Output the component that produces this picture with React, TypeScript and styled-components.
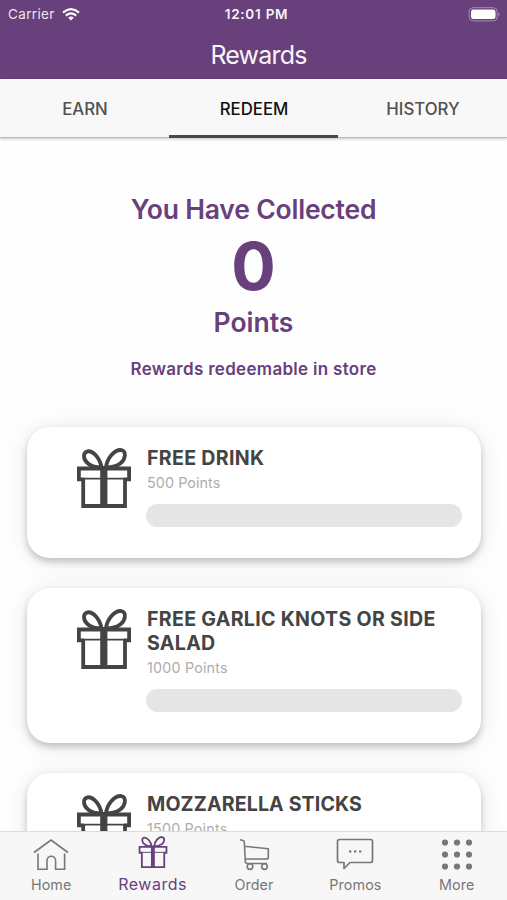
import React from "react";
import styled, { createGlobalStyle } from "styled-components";

const purple = "#68407b";
const ink = "#444444";

const Global = createGlobalStyle`
  * { box-sizing: border-box; }
  body { margin: 0; background: #fff; font-family: Inter, "Liberation Sans", sans-serif; }
`;

const Screen = styled.div`
  display: flex;
  flex-direction: column;
  width: 507px;
  height: 900px;
  overflow: hidden;
  background: #fefefe;
`;

const Header = styled.header`
  flex: none;
  height: 79px;
  background: ${purple};
  color: #f8f4fa;
`;

const StatusBar = styled.div`
  display: grid;
  grid-template-columns: 1fr auto 1fr;
  align-items: center;
  height: 27px;
  padding: 0 6px 0 8px;
  font-size: 13.5px;
  line-height: 28px;
`;

const Carrier = styled.div`
  display: flex;
  align-items: center;
  gap: 7px;
  letter-spacing: 0.35px;
  color: #ece4ef;
`;

const Clock = styled.div`
  font-weight: 600;
  letter-spacing: 0.75px;
  padding-left: 4px;
`;

const Battery = styled.svg`
  justify-self: end;
`;

const Title = styled.h1`
  margin: 0;
  padding-left: 10px;
  text-align: center;
  font-size: 25px;
  line-height: 56px;
  font-weight: 400;
  letter-spacing: -0.8px;
`;

const Tabs = styled.nav`
  position: relative;
  z-index: 1;
  flex: none;
  display: grid;
  grid-template-columns: repeat(3, 1fr);
  height: 59px;
  background: #f8f8f8;
  border-bottom: 1px solid #b9b9b9;
  box-shadow: 0 1px 3px rgba(0, 0, 0, 0.22);
`;

const Tab = styled.div<{ $active?: boolean }>`
  height: 59px;
  padding-left: 1px;
  text-align: center;
  font-size: 16.8px;
  line-height: 60px;
  font-weight: 500;
  color: ${(p) => (p.$active ? "#111" : "#505050")};
  box-shadow: ${(p) => (p.$active ? "inset 0 -3px #484848" : "none")};
`;

const Content = styled.main`
  flex: 1;
  min-height: 0;
  overflow: hidden;
`;

const Summary = styled.section`
  display: flex;
  flex-direction: column;
  align-items: center;
  height: 289px;
  padding-top: 52px;
  color: ${purple};
`;

const Heading = styled.div<{ $spacing: number }>`
  font-size: 26.5px;
  line-height: 39px;
  font-weight: 600;
  letter-spacing: ${(p) => p.$spacing}px;
`;

const Total = styled.div`
  font-size: 66px;
  line-height: 74px;
  font-weight: 700;
`;

const Note = styled.div`
  margin-top: 15px;
  font-size: 17px;
  line-height: 24px;
  font-weight: 600;
  letter-spacing: 0.3px;
`;

const CardList = styled.section`
  display: flex;
  flex-direction: column;
  gap: 30px;
  padding: 0 26px 0 27px;
`;

const Card = styled.article`
  display: flex;
  align-items: flex-start;
  gap: 15px;
  padding: 18px 19px 31px 49px;
  border-radius: 23px;
  background: #fff;
  color: ${ink};
  box-shadow: 0 4px 7px rgba(0, 0, 0, 0.2), 0 2px 26px rgba(0, 0, 0, 0.09);
`;

const CardBody = styled.div`
  flex: 1;
`;

const CardTitle = styled.h2<{ $spacing: number }>`
  margin: 0;
  padding-top: 0.5px;
  font-size: 19.6px;
  line-height: 24.4px;
  font-weight: 650;
  letter-spacing: ${(p) => p.$spacing}px;
`;

const CardPoints = styled.div<{ $spacing: number }>`
  font-size: 14.3px;
  line-height: 20px;
  padding-top: 3px;
  height: 34px;
  letter-spacing: ${(p) => p.$spacing}px;
  color: #adadad;
`;

const Progress = styled.div`
  height: 23.1px;
  margin-left: -1px;
  border-radius: 12px;
  background: #e5e5e5;
`;

const BottomNav = styled.nav`
  position: relative;
  flex: none;
  display: grid;
  grid-template-columns: repeat(5, 1fr);
  height: 69px;
  background: #f7f7f7;
  border-top: 1px solid #dcdcdc;
`;

const NavItem = styled.div<{ $active?: boolean }>`
  display: flex;
  flex-direction: column;
  align-items: center;
  color: ${(p) => (p.$active ? purple : "#777")};
`;

const NavIcon = styled.div<{ $active?: boolean }>`
  display: flex;
  height: ${(p) => (p.$active ? 42 : 43)}px;
  padding: 2px 0 0 1px;
`;

const NavLabel = styled.div<{ $active?: boolean }>`
  font-size: ${(p) => (p.$active ? 16 : 14.3)}px;
  line-height: 20px;
  padding-left: 1px;
  letter-spacing: ${(p) => (p.$active ? 0.5 : 0.12)}px;
`;

const Gift = ({ width, height, stroke = 3.8 }: { width: number; height: number; stroke?: number }) => (
  <svg width={width} height={height} viewBox="0 0 56 64" fill="none" stroke="currentColor" strokeWidth={stroke}>
    <path d="M8 34.300H2.900V23.500h50.200v10.800H48M7.200 34v27h41.800V34" />
    <path d="M7 33.600h42" strokeWidth="1.800" />
    <path d="M27.800 21v41" strokeWidth="7.200" />
    <path d="M25.500 22.500C24 13 17 5.500 11.500 6.300C6.500 7.500 7 14.500 12 18.500C15.500 21.500 20 22.500 25.500 22.500zM30 22.500C31 13 38.500 4.500 45 5C51 6 49.500 14.500 44.500 18.300C40.500 21.500 36 22.500 30 22.500z" />
  </svg>
);

const HomeIcon = () => (
  <svg width="38" height="38" viewBox="0 0 38 38" fill="none" stroke="currentColor" strokeWidth="1.600">
    <path d="M2 18.500L19 6l17 12.500M6 19.500V35.200h9V26.500a4.300 4.300 0 0 1 8.600 0v8.700h9V19.500" />
  </svg>
);

const CartIcon = () => (
  <svg width="38" height="38" viewBox="0 0 38 38" fill="none" stroke="currentColor" strokeWidth="1.600" strokeLinejoin="round">
    <path d="M5 5.700l3 .800q1.200.300 1.300 1.500l1 19.500q.2 2 2.200 2H32M9.500 12.200l23.800 2.600v8.400q0 1.800-1.800 1.800H10.500" />
    <circle cx="15" cy="32.600" r="2.800" />
    <circle cx="29.500" cy="32.600" r="2.800" />
  </svg>
);

const PromoIcon = () => (
  <svg width="38" height="38" viewBox="0 0 38 38" fill="none" stroke="currentColor" strokeWidth="1.700" strokeLinejoin="round">
    <path d="M3.500 5.500h31a2 2 0 0 1 2 2v19a2 2 0 0 1-2 2H14l-6 6v-6H3.500a2 2 0 0 1-2-2V7.500a2 2 0 0 1 2-2z" />
    <path d="M13 17.500h2.400M18 17.500h2.400M23 17.500h2.400" strokeWidth="2" />
  </svg>
);

const MoreIcon = () => (
  <svg width="38" height="38" viewBox="0 0 38 38" fill="currentColor">
    {[8.5, 20.5, 32.5].map((y) => [7, 19, 31].map((x) => <circle key={`${x}-${y}`} cx={x} cy={y} r="3.100" />))}
  </svg>
);

const WifiIcon = () => (
  <svg width="18" height="13" viewBox="0 0 18 13" fill="none" stroke="#fff" strokeWidth="2.100">
    <path d="M1 4.600Q9-2.200 17 4.600M3.800 7.600Q9 3.200 14.200 7.600" />
    <path d="M9 12.500L6.200 9.700Q9 7.500 11.800 9.700z" fill="#fff" stroke="none" />
  </svg>
);

const rewards = [
  { title: "FREE DRINK", points: "500 Points", titleSpacing: 0.3, spacing: 0.1 },
  { title: "FREE GARLIC KNOTS OR SIDE SALAD", points: "1000 Points", titleSpacing: 0.3, spacing: 0.2 },
  { title: "MOZZARELLA STICKS", points: "1500 Points", titleSpacing: 0.13, spacing: 0.2 },
];

const navItems = [
  { label: "Home", icon: <HomeIcon /> },
  { label: "Rewards", icon: <Gift width={30} height={35} stroke={3.4} />, active: true },
  { label: "Order", icon: <CartIcon /> },
  { label: "Promos", icon: <PromoIcon /> },
  { label: "More", icon: <MoreIcon /> },
];

export default function App() {
  return (
    <Screen>
      <Global />
      <Header>
        <StatusBar>
          <Carrier>
            <span>Carrier</span>
            <WifiIcon />
          </Carrier>
          <Clock>12:01 PM</Clock>
          <Battery width="33" height="15" viewBox="0 0 33 15">
            <rect x="1.200" y="0.700" width="28" height="13.200" rx="4" fill="none" stroke="#a68db2" strokeWidth="1" />
            <rect x="3" y="2.500" width="24.500" height="9.600" rx="2.400" fill="#fff" />
            <path d="M30.500 5.200q2.200 2.300 0 4.600z" fill="#a68db2" />
          </Battery>
        </StatusBar>
        <Title>Rewards</Title>
      </Header>
      <Tabs>
        <Tab>EARN</Tab>
        <Tab $active>REDEEM</Tab>
        <Tab>HISTORY</Tab>
      </Tabs>
      <Content>
        <Summary>
          <Heading $spacing={-0.2}>You Have Collected</Heading>
          <Total>0</Total>
          <Heading $spacing={0}>Points</Heading>
          <Note>Rewards redeemable in store</Note>
        </Summary>
        <CardList>
          {rewards.map((r) => (
            <Card key={r.title}>
              <Gift width={56} height={64} />
              <CardBody>
                <CardTitle $spacing={r.titleSpacing}>{r.title}</CardTitle>
                <CardPoints $spacing={r.spacing}>{r.points}</CardPoints>
                <Progress />
              </CardBody>
            </Card>
          ))}
        </CardList>
      </Content>
      <BottomNav>
        {navItems.map((n) => (
          <NavItem key={n.label} $active={n.active}>
            <NavIcon $active={n.active}>{n.icon}</NavIcon>
            <NavLabel $active={n.active}>{n.label}</NavLabel>
          </NavItem>
        ))}
      </BottomNav>
    </Screen>
  );
}
